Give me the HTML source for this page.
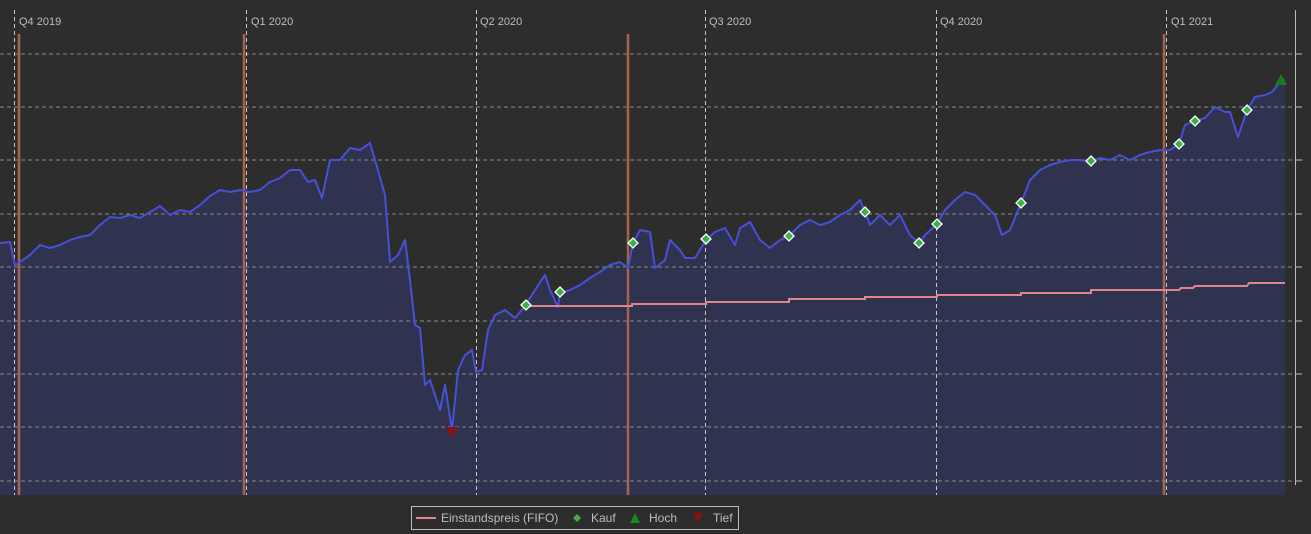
<!DOCTYPE html>
<html><head><meta charset="utf-8"><style>
html,body{margin:0;padding:0;background:#2d2d2d;width:1311px;height:534px;overflow:hidden}
svg{display:block}
text{font-family:"Liberation Sans",sans-serif}
</style></head><body>
<svg width="1311" height="534" viewBox="0 0 1311 534">
<rect width="1311" height="534" fill="#2d2d2d"/>
<defs>
<path id="ln" d="M0,243 L10,242 L15,265 L20,262 L30,255 L40,245 L50,248 L60,245 L70,240 L80,237 L90,235 L100,225 L110,217 L120,218 L130,215 L140,218 L150,212 L160,206 L170,215 L180,210 L190,212 L200,205 L210,196 L220,190 L230,192 L240,190 L250,192 L260,190 L270,182 L280,178 L290,170 L300,170 L308,182 L315,180 L322,198 L330,160 L340,160 L350,148 L360,150 L370,143 L375,160 L385,195 L390,262 L398,255 L405,240 L410,280 L415,325 L420,328 L425,385 L430,380 L435,395 L440,410 L445,385 L452,430 L458,370 L465,355 L472,350 L476,372 L482,370 L488,330 L495,315 L505,310 L515,318 L525,306 L535,290 L545,275 L550,290 L558,307 L560,293 L570,290 L580,285 L590,278 L600,272 L610,265 L620,262 L628,268 L633,243 L640,230 L650,232 L655,268 L665,260 L670,240 L680,250 L685,258 L695,258 L706,240 L715,232 L725,228 L735,245 L740,228 L750,222 L760,240 L770,248 L780,240 L789,236 L800,225 L810,220 L820,225 L830,222 L840,215 L850,210 L860,200 L865,212 L870,225 L880,215 L890,225 L900,215 L910,235 L919,243 L925,235 L937,224 L945,210 L955,200 L965,192 L975,195 L985,205 L995,215 L1002,235 L1010,230 L1021,203 L1030,180 L1040,170 L1050,165 L1060,162 L1070,160 L1080,160 L1091,161 L1100,158 L1110,160 L1120,155 L1130,160 L1140,155 L1150,152 L1160,150 L1170,150 L1179,144 L1185,125 L1195,121 L1205,118 L1215,107 L1225,112 L1230,112 L1238,137 L1247,110 L1255,97 L1265,95 L1272,92 L1280,82 L1285,80"/>
</defs>
<path d="M0,243 L10,242 L15,265 L20,262 L30,255 L40,245 L50,248 L60,245 L70,240 L80,237 L90,235 L100,225 L110,217 L120,218 L130,215 L140,218 L150,212 L160,206 L170,215 L180,210 L190,212 L200,205 L210,196 L220,190 L230,192 L240,190 L250,192 L260,190 L270,182 L280,178 L290,170 L300,170 L308,182 L315,180 L322,198 L330,160 L340,160 L350,148 L360,150 L370,143 L375,160 L385,195 L390,262 L398,255 L405,240 L410,280 L415,325 L420,328 L425,385 L430,380 L435,395 L440,410 L445,385 L452,430 L458,370 L465,355 L472,350 L476,372 L482,370 L488,330 L495,315 L505,310 L515,318 L525,306 L535,290 L545,275 L550,290 L558,307 L560,293 L570,290 L580,285 L590,278 L600,272 L610,265 L620,262 L628,268 L633,243 L640,230 L650,232 L655,268 L665,260 L670,240 L680,250 L685,258 L695,258 L706,240 L715,232 L725,228 L735,245 L740,228 L750,222 L760,240 L770,248 L780,240 L789,236 L800,225 L810,220 L820,225 L830,222 L840,215 L850,210 L860,200 L865,212 L870,225 L880,215 L890,225 L900,215 L910,235 L919,243 L925,235 L937,224 L945,210 L955,200 L965,192 L975,195 L985,205 L995,215 L1002,235 L1010,230 L1021,203 L1030,180 L1040,170 L1050,165 L1060,162 L1070,160 L1080,160 L1091,161 L1100,158 L1110,160 L1120,155 L1130,160 L1140,155 L1150,152 L1160,150 L1170,150 L1179,144 L1185,125 L1195,121 L1205,118 L1215,107 L1225,112 L1230,112 L1238,137 L1247,110 L1255,97 L1265,95 L1272,92 L1280,82 L1285,80 L1285,495 L0,495 Z" fill="#30334f"/>
<g stroke="#8a8a8a" stroke-dasharray="4,3" stroke-width="1">
<line x1="0" y1="54" x2="1295" y2="54"/><line x1="0" y1="107" x2="1295" y2="107"/><line x1="0" y1="160" x2="1295" y2="160"/><line x1="0" y1="214" x2="1295" y2="214"/><line x1="0" y1="267" x2="1295" y2="267"/><line x1="0" y1="321" x2="1295" y2="321"/><line x1="0" y1="374" x2="1295" y2="374"/><line x1="0" y1="427" x2="1295" y2="427"/><line x1="0" y1="481" x2="1295" y2="481"/>
</g>
<g stroke="#c8c8c8" stroke-dasharray="4,3" stroke-width="1">
<line x1="14.5" y1="10" x2="14.5" y2="495"/><line x1="246.5" y1="10" x2="246.5" y2="495"/><line x1="476.5" y1="10" x2="476.5" y2="495"/><line x1="705.5" y1="10" x2="705.5" y2="495"/><line x1="936.5" y1="10" x2="936.5" y2="495"/><line x1="1166.5" y1="10" x2="1166.5" y2="495"/>
</g>
<g stroke="#b56a4e" stroke-width="2.5" opacity="0.9">
<line x1="19" y1="34" x2="19" y2="495"/><line x1="244" y1="34" x2="244" y2="495"/><line x1="628" y1="34" x2="628" y2="495"/><line x1="1164" y1="34" x2="1164" y2="495"/>
</g>
<line x1="1295.5" y1="10" x2="1295.5" y2="485" stroke="#bbb" stroke-width="1"/>
<g stroke="#bbb"><line x1="1295" y1="54" x2="1302" y2="54"/><line x1="1295" y1="107" x2="1302" y2="107"/><line x1="1295" y1="160" x2="1302" y2="160"/><line x1="1295" y1="214" x2="1302" y2="214"/><line x1="1295" y1="267" x2="1302" y2="267"/><line x1="1295" y1="321" x2="1302" y2="321"/><line x1="1295" y1="374" x2="1302" y2="374"/><line x1="1295" y1="427" x2="1302" y2="427"/><line x1="1295" y1="481" x2="1302" y2="481"/></g>
<g fill="#bdbdbd" font-size="11">
<text x="19" y="25">Q4 2019</text><text x="251" y="25">Q1 2020</text><text x="480" y="25">Q2 2020</text><text x="709" y="25">Q3 2020</text><text x="940" y="25">Q4 2020</text><text x="1171" y="25">Q1 2021</text>
</g>
<use href="#ln" fill="none" stroke="#4650d8" stroke-width="2" stroke-linejoin="round"/>
<path d="M526,306 L632,306 L632,304 L706,304 L706,302 L789,302 L789,299 L865,299 L865,297 L937,297 L937,295 L1021,295 L1021,293 L1091,293 L1091,290 L1179,290 L1181,288 L1193,288 L1195,286 L1247,286 L1249,283 L1285,283" fill="none" stroke="#e0868b" stroke-width="2"/>
<g fill="#3cb043" stroke="#fff" stroke-width="1.3">
<path d="M526,300 l5,5 l-5,5 l-5,-5z"/><path d="M560,287 l5,5 l-5,5 l-5,-5z"/><path d="M633,238 l5,5 l-5,5 l-5,-5z"/><path d="M706,234 l5,5 l-5,5 l-5,-5z"/><path d="M789,231 l5,5 l-5,5 l-5,-5z"/><path d="M865,207 l5,5 l-5,5 l-5,-5z"/><path d="M919,238 l5,5 l-5,5 l-5,-5z"/><path d="M937,219 l5,5 l-5,5 l-5,-5z"/><path d="M1021,198 l5,5 l-5,5 l-5,-5z"/><path d="M1091,156 l5,5 l-5,5 l-5,-5z"/><path d="M1179,139 l5,5 l-5,5 l-5,-5z"/><path d="M1195,116 l5,5 l-5,5 l-5,-5z"/><path d="M1247,105 l5,5 l-5,5 l-5,-5z"/>
</g>
<path d="M1281,74 l6,11 l-12,0z" fill="#1a7a1a"/>
<path d="M446,427 l12,0 l-6,11z" fill="#8b1010"/>
<rect x="411.5" y="506.5" width="327" height="23" fill="none" stroke="#bbb"/>
<line x1="416" y1="518" x2="436" y2="518" stroke="#e0868b" stroke-width="2"/>
<g fill="#bdbdbd" font-size="12"><text x="441" y="522">Einstandspreis (FIFO)</text><text x="591" y="522">Kauf</text><text x="649" y="522">Hoch</text><text x="713" y="522">Tief</text></g>
<path d="M577,514 l4,4 l-4,4 l-4,-4z" fill="#3cb043"/>
<path d="M635,513 l5,10 l-10,0z" fill="#1a8a1a"/>
<path d="M693,513 l10,0 l-5,10z" fill="#8b1010"/>
</svg>
</body></html>
